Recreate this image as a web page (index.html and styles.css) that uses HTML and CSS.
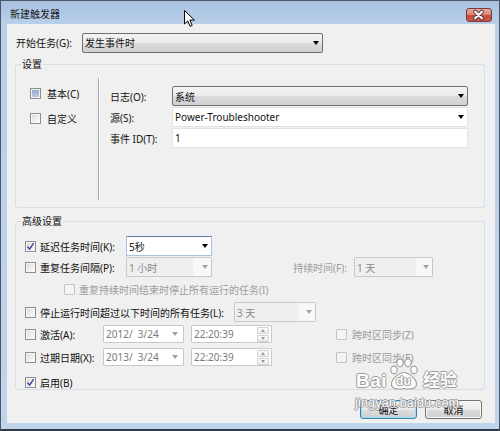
FILE: index.html
```html
<!DOCTYPE html>
<html lang="zh-CN">
<head>
<meta charset="utf-8">
<title>新建触发器</title>
<link rel="stylesheet" href="styles.css">
</head>
<body>
<div class="window">
  <div class="titlebar">
    <span class="title">新建触发器</span>
    <div class="close">
      <svg width="26" height="14" viewBox="0 0 26 14">
        <path d="M9.5 3.5 L16.5 10.5 M16.5 3.5 L9.5 10.5" stroke="#5a3a38" stroke-width="4.2" stroke-linecap="round"/>
        <path d="M9.5 3.5 L16.5 10.5 M16.5 3.5 L9.5 10.5" stroke="#ffffff" stroke-width="2.2" stroke-linecap="round"/>
      </svg>
    </div>
  </div>
  <div class="client">
    <div class="start-row">
      <span class="start-label">开始任务(G):</span>
      <div class="combo btn-combo start-combo"><span class="val">发生事件时</span><span class="arrow"></span></div>
    </div>

    <fieldset class="group settings">
      <legend>设置</legend>
      <div class="settings-body">
        <div class="kind-col">
          <div class="opt"><span class="chk mixed"></span><span class="opt-text">基本(C)</span></div>
          <div class="opt"><span class="chk"></span><span class="opt-text">自定义</span></div>
        </div>
        <div class="vsep"></div>
        <div class="fields">
          <div class="field"><span class="flabel">日志(O):</span><div class="combo btn-combo grow"><span class="val">系统</span><span class="arrow"></span></div></div>
          <div class="field"><span class="flabel">源(S):</span><div class="combo edit grow"><span class="val">Power-Troubleshooter</span><span class="arrow"></span></div></div>
          <div class="field"><span class="flabel">事件 ID(T):</span><div class="combo edit grow"><span class="val">1</span></div></div>
        </div>
      </div>
    </fieldset>

    <fieldset class="group adv">
      <legend>高级设置</legend>
      <div class="adv-body">
        <div class="row r1">
          <span class="chk on"><svg width="9" height="9" viewBox="0 0 9 9"><path d="M1.5 4.5 L3.6 7.2 L7.6 1.2" fill="none" stroke="#3b5295" stroke-width="1.5"/></svg></span>
          <span class="lbl w-delay">延迟任务时间(K):</span>
          <div class="combo edit focus c86"><span class="val">5秒</span><span class="arrow"></span></div>
        </div>
        <div class="row r2">
          <span class="chk"></span>
          <span class="lbl w-delay">重复任务间隔(P):</span>
          <div class="combo dis c86"><span class="val">1 小时</span><span class="arrow"></span></div>
          <span class="lbl dur dim">持续时间(F):</span>
          <div class="combo dis c79"><span class="val">1 天</span><span class="arrow"></span></div>
        </div>
        <div class="row r3">
          <span class="chk dis indent"></span>
          <span class="lbl dim">重复持续时间结束时停止所有运行的任务(I)</span>
        </div>
        <div class="row r4">
          <span class="chk"></span>
          <span class="lbl w-stop">停止运行时间超过以下时间的所有任务(L):</span>
          <div class="combo dis c82"><span class="val">3 天</span><span class="arrow"></span></div>
        </div>
        <div class="row r5">
          <span class="chk"></span>
          <span class="lbl w-act">激活(A):</span>
          <div class="box date"><span class="val">2012/  3/24</span><span class="arrow"></span></div>
          <div class="box time"><span class="val">22:20:39</span><span class="spin"><span class="sbtn"><span class="up"></span></span><span class="sbtn"><span class="down"></span></span></span></div>
          <span class="chk dis sync"></span>
          <span class="lbl dim">跨时区同步(Z)</span>
        </div>
        <div class="row r6">
          <span class="chk"></span>
          <span class="lbl w-act">过期日期(X):</span>
          <div class="box date"><span class="val">2013/  3/24</span><span class="arrow"></span></div>
          <div class="box time"><span class="val">22:20:39</span><span class="spin"><span class="sbtn"><span class="up"></span></span><span class="sbtn"><span class="down"></span></span></span></div>
          <span class="chk dis sync"></span>
          <span class="lbl dim">跨时区同步(E)</span>
        </div>
        <div class="row r7">
          <span class="chk on"><svg width="9" height="9" viewBox="0 0 9 9"><path d="M1.5 4.5 L3.6 7.2 L7.6 1.2" fill="none" stroke="#3b5295" stroke-width="1.5"/></svg></span>
          <span class="lbl">启用(B)</span>
        </div>
      </div>
    </fieldset>

    <div class="buttons">
      <div class="btn default">确定</div>
      <div class="btn">取消</div>
    </div>
  </div>

  <div class="watermark">
    <div class="wm-top">
      <span class="wm-bai">Bai</span>
      <span class="wm-paw">
        <svg width="30" height="33" viewBox="0 0 30 33">
          <g fill="#ffffff" stroke="#9a9a9a" stroke-width="1.2">
            <ellipse cx="5" cy="12" rx="3.2" ry="3.8"/>
            <ellipse cx="11" cy="4.8" rx="3.2" ry="4"/>
            <ellipse cx="19" cy="4.8" rx="3.2" ry="4"/>
            <ellipse cx="25" cy="12" rx="3.2" ry="3.8"/>
            <path d="M15 14.5 C10 14.5 2.5 21 2.5 26 C2.5 31.5 9 31.5 15 30.5 C21 31.5 27.5 31.5 27.5 26 C27.5 21 20 14.5 15 14.5 Z"/>
          </g>
        </svg>
        <span class="wm-du">du</span>
      </span>
      <span class="wm-jy">经验</span>
    </div>
    <div class="wm-url">jingyan.baidu.com</div>
  </div>

  <svg class="cursor" width="12" height="18" viewBox="0 0 12 18">
    <path d="M0.5 0.5 L0.5 14 L3.8 10.9 L6.1 16.3 L8.2 15.4 L5.9 10.1 L10.4 10.1 Z" fill="#ffffff" stroke="#000000" stroke-width="1" stroke-linejoin="round"/>
  </svg>
</div>
</body>
</html>
```

FILE: styles.css
```css
* { box-sizing: border-box; }
html, body { margin: 0; padding: 0; }
body {
  width: 500px;
  height: 431px;
  overflow: hidden;
  font-family: "Noto Sans", "Noto Sans CJK SC", sans-serif;
  font-size: 10px;
  color: #111;
  background: #ffffff;
}

.window {
  position: relative;
  width: 500px;
  height: 431px;
  border: 1px solid #4a5868;
  border-bottom: 2px solid #2f3b47;
  background: linear-gradient(#a7c1df 0px, #b9d0ea 24px, #c0d5ec 100%);
  display: flex;
  flex-direction: column;
}

.titlebar {
  height: 23px;
  flex: none;
  display: flex;
  align-items: flex-start;
  justify-content: space-between;
  padding: 0 7px 0 9px;
}
.title {
  margin-top: 6px;
  line-height: 14px;
  font-size: 10px;
  color: #1a1a1a;
}
.close {
  margin-top: 7px;
  width: 26px;
  height: 14px;
  border: 1px solid #7b3a34;
  border-radius: 3px;
  background: linear-gradient(#e9aaa2 0%, #dc877c 45%, #c8493c 55%, #c9584b 100%);
  display: flex;
}
.close svg { display: block; margin: -1px 0 0 -1px; }

.client {
  flex: 1;
  margin: 0 4px 6px 6px;
  background: #f0f0f0;
  display: flex;
  flex-direction: column;
}

/* start row */
.start-row {
  display: flex;
  align-items: center;
  height: 21px;
  margin: 8px 0 0 9px;
}
.start-label { width: 66px; }
.start-combo { width: 241px; height: 21px; }

/* combos */
.combo {
  display: flex;
  align-items: center;
  height: 20px;
  border: 1px solid #707070;
  border-radius: 2px;
  padding: 0 3px 0 2px;
  flex: none;
}
.combo .val { flex: 1; white-space: pre; }
.arrow {
  width: 0;
  height: 0;
  border-left: 3.5px solid transparent;
  border-right: 3.5px solid transparent;
  border-top: 4px solid #000;
  flex: none;
}
.btn-combo {
  background: linear-gradient(#f3f3f3 0%, #ebebeb 50%, #dcdcdc 51%, #d0d0d0 100%);
}
.edit {
  background: #ffffff;
  border-color: #dfe3e8;
  border-radius: 1px;
}
.focus {
  border-color: #7da2ce #a9c2de #a9c2de #a9c2de;
  border-top-color: #5d7fae;
}
.dis {
  background: linear-gradient(90deg, #efefef 0%, #efefef 78%, #f8f8f8 80%);
  border-color: #c9c9c9;
  border-radius: 1px;
  color: #8a8a8a;
}
.dis .arrow { border-top-color: #a2a2a2; }
.c86 { width: 86px; }
.c79 { width: 79px; }
.c82 { width: 82px; }
.grow { flex: 1; }

/* group boxes */
.group {
  border: 1px solid #d5dfe5;
  border-radius: 3px;
  margin: 0 10px 0 8px;
  padding: 0;
  min-width: 0;
}
.group legend {
  padding: 0 1px;
  margin-left: 5px;
  height: 14px;
  line-height: 14px;
}
.settings { margin-top: 4px; }
.adv { margin-top: 6px; }

.settings-body {
  height: 136px;
  display: flex;
}
.kind-col {
  width: 82px;
  padding: 15px 0 0 14px;
  display: flex;
  flex-direction: column;
  gap: 11px;
}
.opt {
  display: flex;
  align-items: center;
  height: 14px;
}
.opt-text { margin-left: 6px; }
.vsep {
  width: 1px;
  margin: 7px 0;
  background: #a5a5a5;
  box-shadow: 1px 0 0 #ffffff;
}
.fields {
  flex: 1;
  padding: 15px 16px 0 11px;
  display: flex;
  flex-direction: column;
  gap: 1px;
}
.field {
  display: flex;
  align-items: center;
  height: 20px;
}
.flabel { width: 62px; flex: none; }

/* checkboxes */
.chk {
  width: 11px;
  height: 11px;
  flex: none;
  border: 1px solid #8f8f8f;
  background: linear-gradient(135deg, #dadada 0%, #f0f0f0 60%, #ffffff 100%);
  box-shadow: inset 0 0 0 1px #f6f6f6;
  display: flex;
  align-items: center;
  justify-content: center;
}
.chk svg { display: block; }
.chk.mixed {
  background: linear-gradient(#8fa6c7, #c3d0e2);
  box-shadow: inset 0 0 0 1px #eef2f7;
}
.chk.dis {
  border-color: #c4c4c4;
  background: #f4f4f4;
  box-shadow: none;
}

/* advanced rows */
.adv-body {
  padding: 8px 0 0 9px;
  height: 161px;
  display: flex;
  flex-direction: column;
}
.row {
  display: flex;
  align-items: center;
  flex: none;
}
.lbl { margin-left: 4px; white-space: nowrap; }
.dim { color: #9c9c9c; }
.r1 { height: 20px; }
.r2 { height: 20px; margin-top: 1px; }
.r3 { height: 14px; margin-top: 5px; }
.r4 { height: 20px; margin-top: 6px; }
.r5 { height: 18px; margin-top: 3px; }
.r6 { height: 18px; margin-top: 5px; }
.r7 { height: 14px; margin-top: 9px; }
.indent { margin-left: 39px; }
.w-delay { width: 86px; }
.w-stop { width: 194px; }
.w-act { width: 63px; }
.dur {
  width: 142px;
  margin-left: 0;
  padding-right: 7px;
  text-align: right;
}
.sync { margin-left: 64px; }
.sync + .lbl { margin-left: 5px; }

.box {
  width: 81px;
  height: 18px;
  border: 1px solid #c6c9ce;
  border-radius: 1px;
  background: #ffffff;
  display: flex;
  align-items: center;
  padding: 0 3px 0 2px;
  color: #7a7a7a;
  flex: none;
}
.box .val { flex: 1; white-space: pre; }
.box .arrow { border-top-color: #9e9e9e; margin-right: 2px; }
.date { margin-right: 7px; }
.time { padding-right: 2px; }
.spin {
  width: 12px;
  height: 15px;
  display: flex;
  flex-direction: column;
  gap: 1px;
}
.sbtn {
  flex: 1;
  border: 1px solid #d2d2d2;
  border-radius: 1px;
  background: linear-gradient(#fbfbfb, #ececec);
  display: flex;
  align-items: center;
  justify-content: center;
}
.up, .down {
  width: 0;
  height: 0;
  border-left: 2.5px solid transparent;
  border-right: 2.5px solid transparent;
}
.up { border-bottom: 3px solid #9a9a9a; }
.down { border-top: 3px solid #9a9a9a; }

/* buttons */
.buttons {
  display: flex;
  justify-content: flex-end;
  gap: 8px;
  margin-top: 10px;
  padding-right: 13px;
}
.btn {
  width: 57px;
  height: 19px;
  border: 1px solid #707070;
  border-radius: 3px;
  background: linear-gradient(#f3f3f3 0%, #ebebeb 50%, #dddddd 51%, #cfcfcf 100%);
  box-shadow: inset 0 0 0 1px #fbfbfb;
  display: flex;
  align-items: center;
  justify-content: center;
  line-height: 14px;
}
.btn.default {
  border-color: #3c7fb1;
  box-shadow: inset 0 0 0 1px #9fdcfa;
}

/* watermark overlay */
.watermark {
  position: absolute;
  left: 352px;
  top: 356px;
  width: 124px;
  color: #ffffff;
  opacity: 0.9;
  text-shadow: 1px 0 0 #959595, -1px 0 0 #959595, 0 1px 0 #959595, 0 -1px 0 #959595;
  font-family: "Liberation Sans", "Noto Sans CJK SC", sans-serif;
  font-weight: bold;
}
.wm-top {
  display: flex;
  align-items: flex-end;
  height: 34px;
}
.wm-bai {
  font-size: 19px;
  line-height: 20px;
  margin-left: 3px;
  letter-spacing: 0.5px;
}
.wm-paw {
  position: relative;
  width: 30px;
  height: 33px;
  margin-left: 2px;
}
.wm-paw svg { display: block; }
.wm-du {
  position: absolute;
  left: 7px;
  top: 16px;
  font-size: 12px;
  line-height: 14px;
  color: #ffffff;
}
.wm-jy {
  font-size: 17px;
  line-height: 20px;
  margin-left: 4px;
}
.wm-url {
  margin-top: 5px;
  margin-left: 2px;
  font-size: 12.5px;
  line-height: 14px;
  font-weight: normal;
  letter-spacing: 0.2px;
}

.cursor {
  position: absolute;
  left: 183px;
  top: 9px;
}
```
